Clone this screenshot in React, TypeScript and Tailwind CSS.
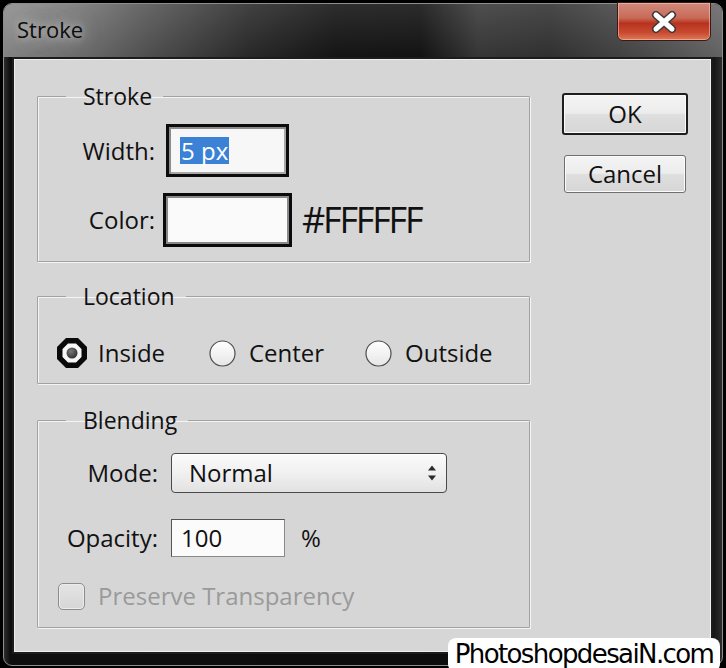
import React from "react";

function RadioOn() {
  return (
    <svg width="30" height="30" viewBox="0 0 30 30">
      <polygon points="9,0 21,0 30,9 30,21 21,30 9,30 0,21 0,9" fill="#0a0a0a" />
      <polygon points="11,5.5 19,5.5 24.5,11 24.5,19 19,24.5 11,24.5 5.5,19 5.5,11" fill="#f7f7f7" />
      <defs>
        <radialGradient id="dot" cx="0.4" cy="0.35" r="0.7">
          <stop offset="0" stopColor="#7a7a7a" />
          <stop offset="1" stopColor="#2e2e2e" />
        </radialGradient>
      </defs>
      <circle cx="15" cy="15" r="5.5" fill="url(#dot)" />
    </svg>
  );
}

function RadioOff() {
  return (
    <svg width="27" height="27" viewBox="0 0 27 27">
      <defs>
        <linearGradient id="roff" x1="0" y1="0" x2="0" y2="1">
          <stop offset="0" stopColor="#ffffff" />
          <stop offset="1" stopColor="#e6e6e6" />
        </linearGradient>
      </defs>
      <circle cx="13.5" cy="13.5" r="12.5" fill="url(#roff)" stroke="#4e4e4e" strokeWidth="1.2" />
    </svg>
  );
}

function CloseX() {
  return (
    <svg width="28" height="22" viewBox="0 0 28 22">
      <path d="M6 4 L22 18 M22 4 L6 18" stroke="#3a3a3a" strokeWidth="8" strokeLinecap="round" />
      <path d="M6 4 L22 18 M22 4 L6 18" stroke="#ffffff" strokeWidth="5" strokeLinecap="round" />
    </svg>
  );
}

function SelectArrows() {
  return (
    <svg width="10" height="18" viewBox="0 0 10 18">
      <polygon points="5,1.5 9,6.5 1,6.5" fill="#2a2a2a" />
      <polygon points="5,16.5 9,11.5 1,11.5" fill="#2a2a2a" />
    </svg>
  );
}

const fieldsetCls =
  "border border-[#a2a2a2] shadow-[inset_1px_1px_0_#f4f4f4,1px_1px_0_#f4f4f4] rounded-[1px]";
const legendCls = "ml-[28px] pl-[17px] pr-[11px] text-[23px] leading-[28px] text-[#111]";

export default function App() {
  return (
    <div className="relative w-[726px] h-[668px] overflow-hidden bg-black font-['Open_Sans','Noto_Sans',sans-serif] text-[#111]">
      <div className="ml-[3px] mt-[3px] w-[720px] h-[663px] rounded-[9px] border border-[#8d8d8d] bg-[linear-gradient(90deg,#2e2e2e_0px,#0e0e0e_6px,#0c0c0c_calc(100%_-_12px),#2c2c2c_100%)] flex flex-col">
        {/* title bar */}
        <div className="h-[53px] shrink-0 flex items-start justify-between rounded-t-[8px] bg-[linear-gradient(180deg,rgba(255,255,255,0.10),rgba(0,0,0,0.08)),linear-gradient(90deg,#8e8e8e_0%,#7a7a7a_9%,#555555_20%,#2c2c2c_34%,#161616_46%,#141414_58%,#3a3a3a_66%,#343434_76%,#474747_86%,#6a6a6a_100%)]">
          <div className="pl-[13px] pt-[11px] text-[22px] leading-[28px] text-[#0d0d0d] [text-shadow:0_0_10px_rgba(220,220,220,0.9),0_0_18px_rgba(200,200,200,0.6)]">
            Stroke
          </div>
          <div className="mr-[11px] -mt-[2px] w-[94px] h-[39px] rounded-b-[6px] border border-[#3a1a14] shadow-[inset_0_0_0_1px_rgba(255,200,190,0.55)] bg-[linear-gradient(180deg,#d08a7c_0%,#c96a58_40%,#b8321e_55%,#c94a30_80%,#dc7a58_100%)] flex items-center justify-center">
            <CloseX />
          </div>
        </div>

        {/* client area */}
        <div className="ml-[8px] mr-[9px] mb-[11px] flex-1 border-2 border-[#1c1c1c] bg-[#d6d6d6] shadow-[inset_1px_1px_0_#eeeeee,inset_-1px_-1px_0_#eeeeee] flex">
          {/* left column */}
          <div className="ml-[23px] pt-[23px] w-[493px] flex flex-col">
            {/* Stroke */}
            <fieldset className={`${fieldsetCls} pb-[14px]`}>
              <legend className={legendCls}>Stroke</legend>
              <div className="flex items-center pt-[14px]">
                <div className="w-[117px] text-right text-[24px] leading-[28px]">Width:</div>
                <div className="ml-[11px] w-[123px] h-[53px] border-[3px] border-[#0c0c0c] bg-[#f7f7f7] shadow-[inset_2px_2px_0_#8c8c8c,inset_-2px_-2px_0_#a8a8a8] flex items-center pl-[11px]">
                  <span className="bg-[#3b82d6] text-white text-[24px] leading-[27px] px-[1px]">5 px</span>
                </div>
              </div>
              <div className="flex items-center mt-[16px]">
                <div className="w-[117px] text-right text-[24px] leading-[28px]">Color:</div>
                <div className="ml-[8px] w-[129px] h-[54px] border-[3px] border-[#0c0c0c] bg-[#fafafa] shadow-[inset_0_0_0_2px_#8a8a8a]" />
                <div className="ml-[10px] text-[36px] leading-[40px] tracking-[-2.2px] text-[#111]">#FFFFFF</div>
              </div>
            </fieldset>

            {/* Location */}
            <fieldset className={`${fieldsetCls} mt-[20px] pb-[15px]`}>
              <legend className={legendCls}>Location</legend>
              <div className="flex items-center pt-[28px] pl-[19px] text-[24px] leading-[30px]">
                <div className="w-[152px] flex items-center">
                  <RadioOn />
                  <span className="ml-[11px]">Inside</span>
                </div>
                <div className="w-[156px] flex items-center">
                  <RadioOff />
                  <span className="ml-[13px]">Center</span>
                </div>
                <div className="flex items-center">
                  <RadioOff />
                  <span className="ml-[13px]">Outside</span>
                </div>
              </div>
            </fieldset>

            {/* Blending */}
            <fieldset className={`${fieldsetCls} mt-[22px] pb-[17px]`}>
              <legend className={legendCls}>Blending</legend>
              <div className="flex items-center pt-[19px]">
                <div className="w-[120px] text-right text-[24px] leading-[28px]">Mode:</div>
                <div className="ml-[13px] w-[276px] h-[40px] rounded-[4px] border border-[#4a4a4a] bg-[linear-gradient(180deg,#fbfbfb_0%,#f0f0f0_50%,#e2e2e2_100%)] shadow-[inset_0_1px_0_#ffffff] flex items-center justify-between pl-[17px] pr-[9px]">
                  <span className="text-[24px] leading-[28px]">Normal</span>
                  <SelectArrows />
                </div>
              </div>
              <div className="flex items-center mt-[26px]">
                <div className="w-[120px] text-right text-[24px] leading-[28px]">Opacity:</div>
                <div className="ml-[13px] w-[114px] h-[38px] border border-[#555555] border-b-[#8a8a8a] border-r-[#8a8a8a] bg-[#fbfbfb] flex items-center pl-[9px]">
                  <span className="text-[24px] leading-[28px]">100</span>
                </div>
                <span className="ml-[16px] text-[24px] leading-[28px]">%</span>
              </div>
              <div className="flex items-center mt-[25px] pl-[20px]">
                <div className="w-[27px] h-[27px] rounded-[5px] border border-[#8c8c8c] bg-[linear-gradient(180deg,#e4e4e4,#d6d6d6)] shadow-[inset_0_0_0_1px_#ececec]" />
                <span className="ml-[13px] text-[24px] leading-[28px] text-[#9a9a9a]">Preserve Transparency</span>
              </div>
            </fieldset>
          </div>

          {/* right column */}
          <div className="ml-[32px] pt-[34px] flex flex-col">
            <div className="w-[126px] h-[42px] rounded-[3px] border-2 border-[#1e1e1e] shadow-[inset_0_0_0_1px_#fbfbfb] bg-[linear-gradient(180deg,#f4f4f4_0%,#ececec_48%,#dedede_52%,#d6d6d6_100%)] flex items-center justify-center text-[24px] leading-[28px]">
              OK
            </div>
            <div className="mt-[20px] ml-[2px] w-[122px] h-[38px] rounded-[3px] border border-[#6f6f6f] shadow-[inset_0_0_0_1px_#fbfbfb] bg-[linear-gradient(180deg,#f4f4f4_0%,#ececec_48%,#dedede_52%,#d6d6d6_100%)] flex items-center justify-center text-[24px] leading-[28px]">
              Cancel
            </div>
          </div>
        </div>
      </div>

      {/* watermark overlay */}
      <div className="absolute left-[448px] top-[638px] w-[272px] h-[34px] rounded-[8px] bg-white flex items-start justify-center pt-[1px]">
        <span className="font-['DejaVu_Sans',sans-serif] text-[26px] leading-[30px] tracking-[-1.6px] text-black">
          PhotoshopdesaiN.com
        </span>
      </div>
    </div>
  );
}
